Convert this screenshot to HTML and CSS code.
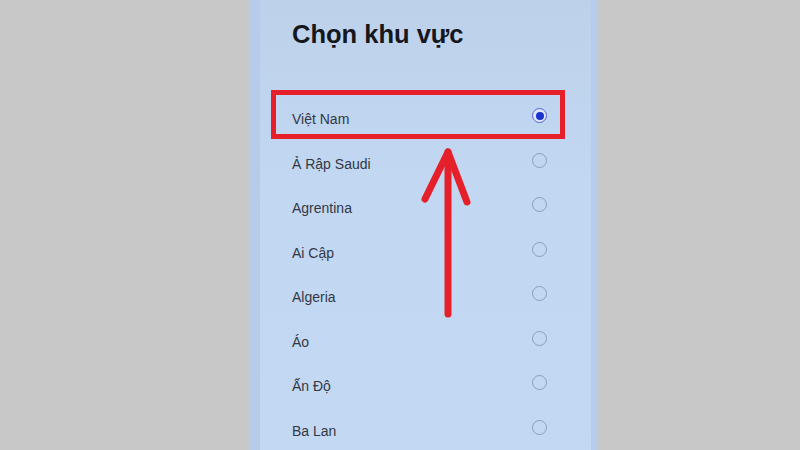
FILE: index.html
```html
<!DOCTYPE html>
<html lang="vi">
<head>
<meta charset="utf-8">
<title>Chọn khu vực</title>
<link rel="stylesheet" href="styles.css">
</head>
<body>
<div class="stage">
  <div class="phone">
    <div class="panel">
      <h1 class="title">Chọn khu vực</h1>
      <ul class="list">
        <li class="row"><span class="name">Việt Nam</span><span class="radio checked"></span></li>
        <li class="row"><span class="name">Ả Rập Saudi</span><span class="radio"></span></li>
        <li class="row"><span class="name">Agrentina</span><span class="radio"></span></li>
        <li class="row"><span class="name">Ai Cập</span><span class="radio"></span></li>
        <li class="row"><span class="name">Algeria</span><span class="radio"></span></li>
        <li class="row"><span class="name">Áo</span><span class="radio"></span></li>
        <li class="row"><span class="name">Ấn Độ</span><span class="radio"></span></li>
        <li class="row"><span class="name">Ba Lan</span><span class="radio"></span></li>
      </ul>
    </div>
    <div class="highlight"></div>
    <svg class="arrow" width="60" height="180" viewBox="0 0 60 180">
      <path d="M30 6 L30 168" />
      <path d="M7 53 L30 6 L49 56" />
    </svg>
  </div>
</div>
</body>
</html>
```

FILE: styles.css
```css
html, body {
  margin: 0;
  padding: 0;
  height: 100%;
}
body {
  background: #c8c8c8;
  font-family: "Liberation Sans", Arial, sans-serif;
  overflow: hidden;
}
.stage {
  display: grid;
  grid-template-columns: 249px 349px 1fr;
  height: 450px;
}
.phone {
  grid-column: 2;
  position: relative;
  background: #b6cce8;
  height: 450px;
  display: flex;
}
.panel {
  margin-left: 11px;
  width: 331px;
  background: linear-gradient(180deg, #bed1ea 0%, #c1d7f2 40%, #c3d9f3 100%);
  padding: 19px 44px 0 32px;
  box-sizing: border-box;
}
.title {
  margin: 0;
  font-size: 25.5px;
  line-height: 30px;
  font-weight: 700;
  color: #15171c;
}
.list {
  list-style: none;
  margin: 48px 0 0 0;
  padding: 0;
}
.row {
  display: flex;
  align-items: center;
  justify-content: space-between;
  height: 44.5px;
  font-size: 14px;
  line-height: 44.5px;
  color: #333844;
}
.radio {
  width: 15px;
  height: 15px;
  box-sizing: border-box;
  border: 1.4px solid #8f9db4;
  border-radius: 50%;
  margin-bottom: 7px;
  display: flex;
  align-items: center;
  justify-content: center;
}
.radio.checked {
  border-color: #5468d4;
  background: #dfe6f8;
}
.radio.checked::after {
  content: "";
  width: 8px;
  height: 8px;
  border-radius: 50%;
  background: #1b32cf;
}
.highlight {
  position: absolute;
  left: 22px;
  top: 90px;
  width: 294px;
  height: 49px;
  box-sizing: border-box;
  border: 5px solid #e5202a;
}
.arrow {
  position: absolute;
  left: 169px;
  top: 146px;
}
.arrow path {
  fill: none;
  stroke: #e5202a;
  stroke-width: 7;
  stroke-linecap: round;
  stroke-linejoin: round;
}
```
